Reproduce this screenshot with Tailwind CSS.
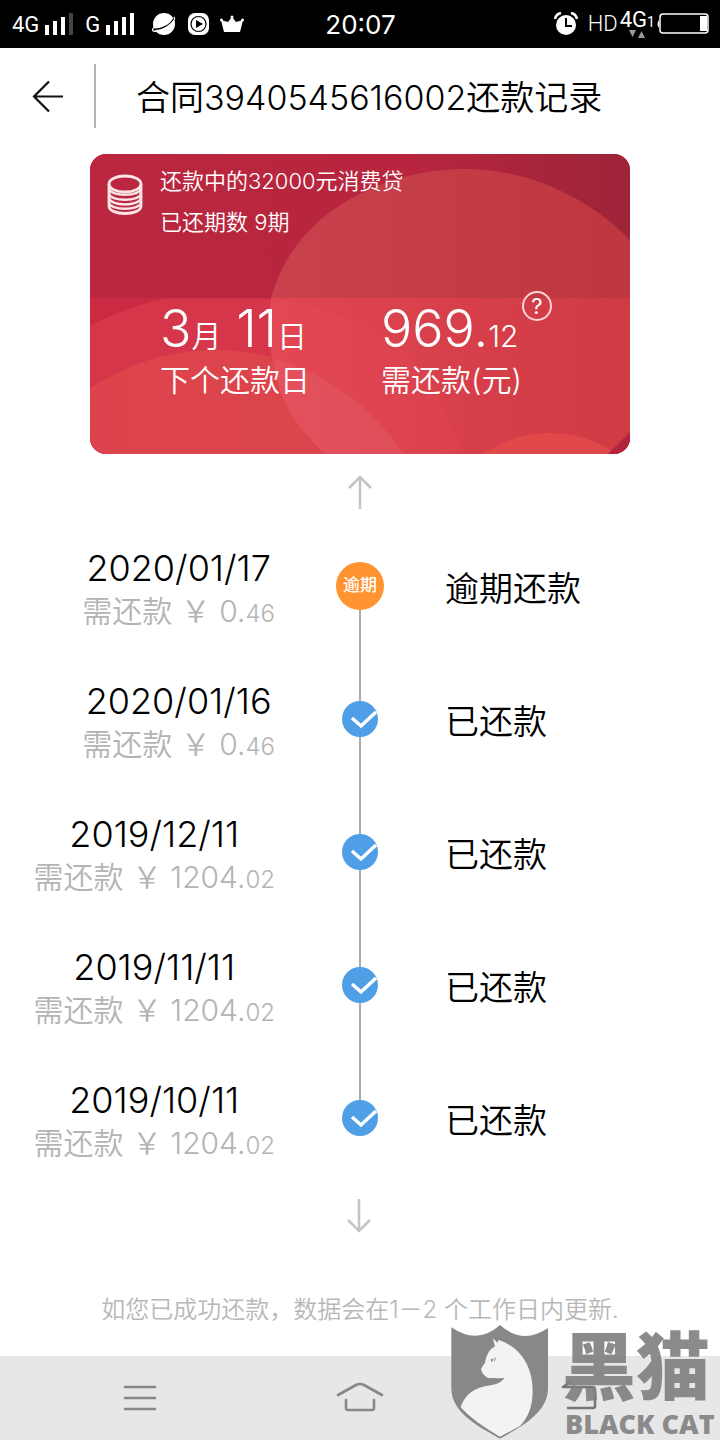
<!DOCTYPE html>
<html lang="zh-CN">
<head>
<meta charset="utf-8">
<meta name="viewport" content="width=device-width, initial-scale=1">
<title>还款记录</title>
<script src="https://cdn.jsdelivr.net/npm/@tailwindcss/browser@4"></script>
</head>
<body class="relative flex min-h-screen flex-col bg-white font-['Inter','Noto_Sans_CJK_SC',sans-serif] font-[350] text-black">

<!-- Status bar -->
<div class="grid h-12 grid-cols-3 items-center bg-black pr-[11px] pl-3 text-white">
  <div class="flex items-center font-['Roboto',sans-serif] font-normal">
    <span class="text-[22px]">4G</span>
    <svg class="ml-1.5 h-6 w-7" viewBox="0 0 28 24" fill="#fff"><path d="M0 13h4v10H0zM8 9h4v14H8zM16 5h4v18h-4z"/><path fill="#444" d="M24 1h4v22h-4z"/></svg>
    <span class="ml-3 text-[22px]">G</span>
    <svg class="ml-1.5 h-6 w-7" viewBox="0 0 28 24" fill="#fff"><path d="M0 13h4v10H0zM8 9h4v14H8zM16 5h4v18h-4zM24 1h4v22h-4z"/></svg>
    <svg class="ml-[18px] h-6 w-6 shrink-0" viewBox="0 0 24 24"><circle cx="12" cy="12" r="11" fill="#fff"/><path d="M2 17C9 18 19 13 22 6" fill="none" stroke="#000" stroke-width="1.500"/><path d="M2 15C-2 20 3 20 8 18.500C15 16 25 8 22 5" fill="none" stroke="#fff" stroke-width="1.200"/></svg>
    <svg class="ml-3 h-6 w-6 shrink-0" viewBox="0 0 24 24"><rect x="0" y="1" width="21" height="22" rx="7" fill="#fff"/><circle cx="10.500" cy="12" r="7.500" fill="none" stroke="#000" stroke-width="1.200"/><path d="M8 8l7 4-7 4z"/></svg>
    <svg class="ml-2 h-6 w-6 shrink-0" viewBox="0 0 24 24" fill="#fff"><path d="M1 8l7 2 4-5 4 5 7-2-3 12H4z"/><circle cx="1.500" cy="8" r="1.500"/><circle cx="12" cy="5" r="1.500"/><circle cx="22.500" cy="8" r="1.500"/></svg>
  </div>
  <div class="text-center text-[26px] font-normal">20:07</div>
  <div class="flex items-center justify-end font-['Roboto',sans-serif]">
    <svg class="mr-2.5 h-6 w-6" viewBox="0 0 24 24"><circle cx="12" cy="13" r="10" fill="#fff"/><path d="M1 7q1-5 6-6M23 7q-1-5-6-6" fill="none" stroke="#fff" stroke-width="2.500"/><path d="M12 6v8h6" fill="none" stroke="#000" stroke-width="2"/></svg>
    <span class="text-[22px] leading-6">HD</span>
    <span class="ml-0.5 flex flex-col items-center">
      <span class="flex h-5 items-end text-[22px] leading-5 font-normal">4G<span class="text-[14px] leading-4">1</span></span>
      <svg class="h-2 w-4" viewBox="0 0 16 8" fill="#999"><path d="M0 0h7l-3.500 7zM9 8h7l-3.500-7z"/></svg>
    </span>
    <svg class="ml-0.5 h-6 w-13" viewBox="0 0 52 24"><path d="M2 8q-3 4 0 8z" fill="#fff"/><rect x="3" y="2" width="48" height="19" rx="3" fill="none" stroke="#fff" stroke-width="1.500"/><rect x="43" y="4" width="7" height="15" fill="#fff"/></svg>
  </div>
</div>

<!-- Title bar -->
<header class="flex h-24 items-center">
  <button type="button" aria-label="返回" class="flex h-16 w-24 items-center justify-center border-r-2 border-[#b4b4b4]">
    <svg class="h-8 w-8" viewBox="0 0 32 32" fill="none" stroke="#111" stroke-width="2.200"><path d="M32 16.500H3M18 1.500L3 16.500l15 15"/></svg>
  </button>
  <h1 class="ml-10 pt-1 text-[34px] leading-10">合同3940545616002还款记录</h1>
</header>

<main class="flex flex-col items-center">
  <!-- Loan card -->
  <section class="relative mt-[10px] h-[300px] w-3/4 overflow-hidden rounded-2xl text-white">
    <svg class="absolute inset-0 h-full w-full" viewBox="0 0 540 300" preserveAspectRatio="none">
      <defs>
        <linearGradient id="top" x1="0" x2="1" y1="0" y2="0"><stop offset="0" stop-color="#ba273f"/><stop offset=".6" stop-color="#b7263e"/><stop offset="1" stop-color="#9d2439"/></linearGradient>
        <linearGradient id="disc" x1="0" x2="1" y1="0" y2="0"><stop offset="0" stop-color="#c9414d"/><stop offset="1" stop-color="#be373e"/></linearGradient>
        <linearGradient id="low" x1="0" x2="1" y1="0" y2="0"><stop offset="0" stop-color="#e04652"/><stop offset="1" stop-color="#cf3a43"/></linearGradient>
        <linearGradient id="left" x1="0" x2="1" y1="0" y2="0"><stop offset="0" stop-color="#dd424c"/><stop offset="1" stop-color="#dc464b"/></linearGradient>
      </defs>
      <rect width="540" height="300" fill="#cb2a43"/>
      <circle cx="125" cy="400" r="260" fill="#d53649"/>
      <circle cx="125" cy="418" r="222" fill="url(#left)"/>
      <path d="M181 144C177 175 180 217 194 247Q206 273 235 300H540V144Z" fill="url(#low)"/>
      <path d="M181 144Q320 165 353 253L373 300H235Q206 273 194 247C180 217 177 175 181 144Z" fill="#ff5560" fill-opacity=".1"/>
      <path d="M184 204Q270 232 313 300H235Q206 273 194 247Q186 228 184 204Z" fill="#fff" fill-opacity=".06"/>
      <circle cx="460" cy="397" r="118" fill="#e0484a"/>
      <path d="M518 300L540 278V300Z" fill="#b0243d"/>
      <rect width="540" height="144" fill="url(#top)"/>
      <path d="M181 144C195 95 226 62 270 40C305 22 340 15 375 15C440 15 500 45 540 86V144Z" fill="url(#disc)"/>
    </svg>
    <div class="relative flex pl-4">
      <svg class="mt-5 mr-4 h-[42px] w-[38px]" viewBox="0 0 38 42" fill="none" stroke="#fce4e8" stroke-width="2.800"><ellipse cx="19" cy="10" rx="16" ry="8"/><path d="M3 10v22c0 10 32 10 32 0V10"/><path d="M3 14c0 9 32 9 32 0M3 19c0 9 32 9 32 0M3 23c0 10 32 10 32 0M3 28c0 9 32 9 32 0" stroke-width="2.400"/></svg>
      <div class="pt-[7px] text-[22px] leading-[41px]">
        <p>还款中的32000元消费贷</p>
        <p>已还期数 9期</p>
      </div>
    </div>
    <div class="relative mt-[54px] flex pl-[70px]">
      <div class="w-[221px]">
        <p class="text-[52px] leading-[64px]">3<span class="text-[30px]">月</span> 11<span class="text-[30px]">日</span></p>
        <p class="-mt-2 text-[30px] leading-10">下个还款日</p>
      </div>
      <div>
        <p class="text-[52px] leading-[64px]">969.<span class="text-[30px]">12</span></p>
        <p class="-mt-2 text-[30px] leading-10">需还款(元)</p>
      </div>
      <button type="button" aria-label="说明" class="-mt-[6px] flex h-[30px] w-[30px] items-center justify-center self-start rounded-full border-2 border-[#fbd5d8] text-[22px] leading-6 font-normal">?</button>
    </div>
  </section>

  <svg class="mt-5 h-9 w-7" viewBox="0 0 28 36" fill="none" stroke="#c4c4c4" stroke-width="2.500"><path d="M14 35V3M3 14L14 3l11 11"/></svg>

  <!-- Repayment timeline -->
  <ol class="mt-[9px] w-full text-[34px]">
    <li class="grid h-[133px] grid-cols-[275fr_170fr_275fr] items-center">
      <div class="justify-self-end pt-[10px] text-center whitespace-nowrap"><p class="text-[36px] leading-[44px]">2020/01/17</p><p class="text-[30px] leading-[42px] text-[#b4b4b4]">需还款 ￥ 0.<span class="text-[24px]">46</span></p></div>
      <div class="flex h-full flex-col items-center"><span class="w-[2px] flex-1"></span><span class="flex h-12 w-12 items-center justify-center rounded-full bg-[#ff9430] text-[17px] font-medium text-white">逾期</span><span class="w-[2px] flex-1 bg-[#aaa]"></span></div>
      <p class="pt-1.5">逾期还款</p>
    </li>
    <li class="grid h-[133px] grid-cols-[275fr_170fr_275fr] items-center">
      <div class="justify-self-end pt-[10px] text-center whitespace-nowrap"><p class="text-[36px] leading-[44px]">2020/01/16</p><p class="text-[30px] leading-[42px] text-[#b4b4b4]">需还款 ￥ 0.<span class="text-[24px]">46</span></p></div>
      <div class="flex h-full flex-col items-center"><span class="w-[2px] flex-1 bg-[#aaa]"></span><svg class="h-9 w-9" viewBox="0 0 36 36"><circle cx="18" cy="18" r="18" fill="#4f9fe6"/><path d="M10 17l9 8 15-14" fill="none" stroke="#fff" stroke-width="3.500"/></svg><span class="w-[2px] flex-1 bg-[#aaa]"></span></div>
      <p class="pt-1.5">已还款</p>
    </li>
    <li class="grid h-[133px] grid-cols-[275fr_170fr_275fr] items-center">
      <div class="justify-self-end pt-[10px] text-center whitespace-nowrap"><p class="text-[36px] leading-[44px]">2019/12/11</p><p class="text-[30px] leading-[42px] text-[#b4b4b4]">需还款 ￥ 1204.<span class="text-[24px]">02</span></p></div>
      <div class="flex h-full flex-col items-center"><span class="w-[2px] flex-1 bg-[#aaa]"></span><svg class="h-9 w-9" viewBox="0 0 36 36"><circle cx="18" cy="18" r="18" fill="#4f9fe6"/><path d="M10 17l9 8 15-14" fill="none" stroke="#fff" stroke-width="3.500"/></svg><span class="w-[2px] flex-1 bg-[#aaa]"></span></div>
      <p class="pt-1.5">已还款</p>
    </li>
    <li class="grid h-[133px] grid-cols-[275fr_170fr_275fr] items-center">
      <div class="justify-self-end pt-[10px] text-center whitespace-nowrap"><p class="text-[36px] leading-[44px]">2019/11/11</p><p class="text-[30px] leading-[42px] text-[#b4b4b4]">需还款 ￥ 1204.<span class="text-[24px]">02</span></p></div>
      <div class="flex h-full flex-col items-center"><span class="w-[2px] flex-1 bg-[#aaa]"></span><svg class="h-9 w-9" viewBox="0 0 36 36"><circle cx="18" cy="18" r="18" fill="#4f9fe6"/><path d="M10 17l9 8 15-14" fill="none" stroke="#fff" stroke-width="3.500"/></svg><span class="w-[2px] flex-1 bg-[#aaa]"></span></div>
      <p class="pt-1.5">已还款</p>
    </li>
    <li class="grid h-[133px] grid-cols-[275fr_170fr_275fr] items-center">
      <div class="justify-self-end pt-[10px] text-center whitespace-nowrap"><p class="text-[36px] leading-[44px]">2019/10/11</p><p class="text-[30px] leading-[42px] text-[#b4b4b4]">需还款 ￥ 1204.<span class="text-[24px]">02</span></p></div>
      <div class="flex h-full flex-col items-center"><span class="w-[2px] flex-1 bg-[#aaa]"></span><svg class="h-9 w-9" viewBox="0 0 36 36"><circle cx="18" cy="18" r="18" fill="#4f9fe6"/><path d="M10 17l9 8 15-14" fill="none" stroke="#fff" stroke-width="3.500"/></svg><span class="w-[2px] flex-1"></span></div>
      <p class="pt-1.5">已还款</p>
    </li>
  </ol>

  <svg class="mt-[13px] h-9 w-7" viewBox="0 0 28 36" fill="none" stroke="#c4c4c4" stroke-width="2.500"><path d="M13 2v32M2 23l11 11 11-11"/></svg>
  <p class="mt-[61px] text-center text-[24px] leading-8 whitespace-nowrap text-[#b8b8b8]">如您已成功还款，数据会在1－2 个工作日内更新.</p>
</main>

<!-- System navigation -->
<nav class="mt-auto grid h-[84px] grid-cols-3 items-center justify-items-center bg-[#e7e7e7] px-[30px]">
  <button type="button" aria-label="菜单"><svg class="h-8 w-12" viewBox="0 0 48 32" fill="none" stroke="#888" stroke-width="2.600" stroke-linecap="round"><path d="M9 5h30M9 16h30M9 27h30"/></svg></button>
  <button type="button" aria-label="主页"><svg class="h-8 w-12" viewBox="0 0 48 32" fill="none" stroke="#888" stroke-width="2.600" stroke-linecap="round" stroke-linejoin="round"><path d="M2 13L20 3q4-2 8 0l18 10M10 18v8q0 2 2 2h24q2 0 2-2v-8"/></svg></button>
  <button type="button" aria-label="后退"><svg class="h-8 w-12" viewBox="0 0 48 32" fill="none" stroke="#777" stroke-width="2.600" stroke-linecap="round" stroke-linejoin="round"><path d="M13 1L7 5h29q3 0 3 3v16q0 2-2 2H12"/></svg></button>
</nav>

<!-- Black Cat watermark -->
<div class="pointer-events-none absolute right-0 bottom-0 flex h-[120px] w-[280px] font-['Noto_Sans_CJK_SC',sans-serif] text-[#807e7e]/90">
  <svg class="h-[120px] w-[122px] shrink-0" viewBox="0 0 366 360">
    <path d="M34 22Q112 76 180 15Q248 76 324 24V205C324 280 240 322 180 356C120 322 34 280 34 205Z" fill="#858383" fill-opacity=".97"/>
    <path d="M158 54L172 68L176 60C235 78 278 135 278 210C278 265 262 295 240 318L180 350Q100 305 62 262C78 215 110 202 155 195Q185 190 193 173C175 176 158 174 145 174C132 168 122 155 124 145L135 128Q140 92 165 79Z" fill="#f3f3f3"/>
    <path d="M151 119l10-4-5 12zM165 111q5 8-3 14z" fill="#858383"/>
  </svg>
  <div class="flex flex-1 flex-col">
    <span class="text-[74px] leading-[84px] font-black whitespace-nowrap">黑猫</span>
    <span class="mt-1 pl-[3px] font-['Open_Sans','Noto_Sans',sans-serif] text-[27px] leading-8 font-extrabold whitespace-nowrap">BLACK CAT</span>
  </div>
</div>
</body>
</html>
